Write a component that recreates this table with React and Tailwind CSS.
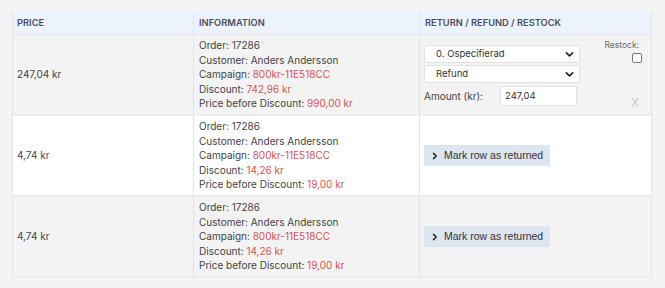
import React from "react";

const rows = [
  {
    price: "247,04 kr",
    order: "17286",
    customer: "Anders Andersson",
    campaign: "800kr-11E518CC",
    discount: "742,96 kr",
    before: "990,00 kr",
    editing: true,
    bg: "bg-[#f3f3f3]",
  },
  {
    price: "4,74 kr",
    order: "17286",
    customer: "Anders Andersson",
    campaign: "800kr-11E518CC",
    discount: "14,26 kr",
    before: "19,00 kr",
    editing: false,
    bg: "bg-white",
  },
  {
    price: "4,74 kr",
    order: "17286",
    customer: "Anders Andersson",
    campaign: "800kr-11E518CC",
    discount: "14,26 kr",
    before: "19,00 kr",
    editing: false,
    bg: "bg-[#f3f3f3]",
  },
];

function Chevron() {
  return (
    <svg width="9" height="9" viewBox="0 0 10 10" className="shrink-0">
      <path d="M1.5 3.2 L5 6.6 L8.5 3.2" fill="none" stroke="#222" strokeWidth="1.8" strokeLinecap="round" strokeLinejoin="round" />
    </svg>
  );
}

function FakeSelect({ value, className }) {
  return (
    <div className={`flex h-[18px] w-[156px] items-center justify-between rounded-[2px] border border-[#e3e3e3] bg-white pl-[11px] pr-[5px] text-[9.5px] text-[#333] ${className}`}>
      <span>{value}</span>
      <Chevron />
    </div>
  );
}

function ReturnEditor({ price }) {
  return (
    <div className="flex h-full pl-[4px] pr-[9px] pt-[10px]">
      <div className="flex flex-col">
        <FakeSelect value="0. Ospecifierad" />
        <FakeSelect value="Refund" className="mt-[2px]" />
        <div className="mt-[3px] flex items-center">
          <span className="w-[76px] text-[10px] text-[#444]">Amount (kr):</span>
          <div className="flex h-[20px] w-[77px] items-center border border-[#e3e3e3] bg-white pl-[4px] text-[9.5px] text-[#333]">
            {price.replace(" kr", "")}
          </div>
        </div>
      </div>
      <div className="ml-auto flex flex-col items-end">
        <span className="-mt-[6px] mr-[3px] text-[8.5px] text-[#666]">Restock:</span>
        <span className="mt-[1px] h-[10px] w-[10px] rounded-[2px] border border-[#777] bg-white" />
        <span className="mt-[34px] mr-[3px] text-[12px] leading-none text-[#c8c8c8] [font-family:'Liberation_Sans',sans-serif]">X</span>
      </div>
    </div>
  );
}

function MarkButton() {
  return (
    <div className="flex h-full items-center pl-[4px]">
      <button className="flex h-[21px] w-[126px] items-center whitespace-nowrap bg-[#dde5f1] pl-[8px] text-[10.5px] text-[#333] [font-family:'Liberation_Sans',Arial,sans-serif]">
        <svg width="6" height="8" viewBox="0 0 6 8" className="mr-[6px]">
          <path d="M1.5 1.4 L4.3 4 L1.5 6.6" fill="none" stroke="#222" strokeWidth="1.5" strokeLinecap="round" strokeLinejoin="round" />
        </svg>
        Mark row as returned
      </button>
    </div>
  );
}

export default function App() {
  return (
    <div className="min-h-screen bg-[#f4f4f4] pl-[12px] pt-[12px] text-[#444] [font-family:Inter,'Noto_Sans',sans-serif]">
      <div className="w-[640px] border-l border-r border-[#e5e5e5]">
        <div className="grid h-[23px] grid-cols-[181px_226px_1fr] border-b border-[#e4e8ee] bg-[#edf3fd] text-[9.3px] font-semibold uppercase text-[#4a4f5a]">
          <div className="flex items-center border-r border-[#e2e6ec] pl-[4px]">Price</div>
          <div className="flex items-center border-r border-[#e2e6ec] pl-[5px]">Information</div>
          <div className="flex items-center pl-[5px]">Return / Refund / Restock</div>
        </div>
        {rows.map((r, i) => (
          <div
            key={i}
            className={`grid h-[81px] grid-cols-[181px_226px_1fr] border-b-2 border-[#ececec] ${r.bg}`}
          >
            <div className="flex items-center border-r border-[#e3e3e3] pl-[4px] text-[10px]">{r.price}</div>
            <div className="flex flex-col justify-center border-r border-[#e3e3e3] pl-[5px] text-[10px] leading-[14.5px]">
              <div>Order: {r.order}</div>
              <div>Customer: {r.customer}</div>
              <div>
                Campaign: <span className="text-[#d9534f]">{r.campaign}</span>
              </div>
              <div>
                Discount: <span className="text-[#d9534f]">{r.discount}</span>
              </div>
              <div>
                Price before Discount: <span className="text-[#d9534f]">{r.before}</span>
              </div>
            </div>
            <div>{r.editing ? <ReturnEditor price={r.price} /> : <MarkButton />}</div>
          </div>
        ))}
      </div>
    </div>
  );
}
